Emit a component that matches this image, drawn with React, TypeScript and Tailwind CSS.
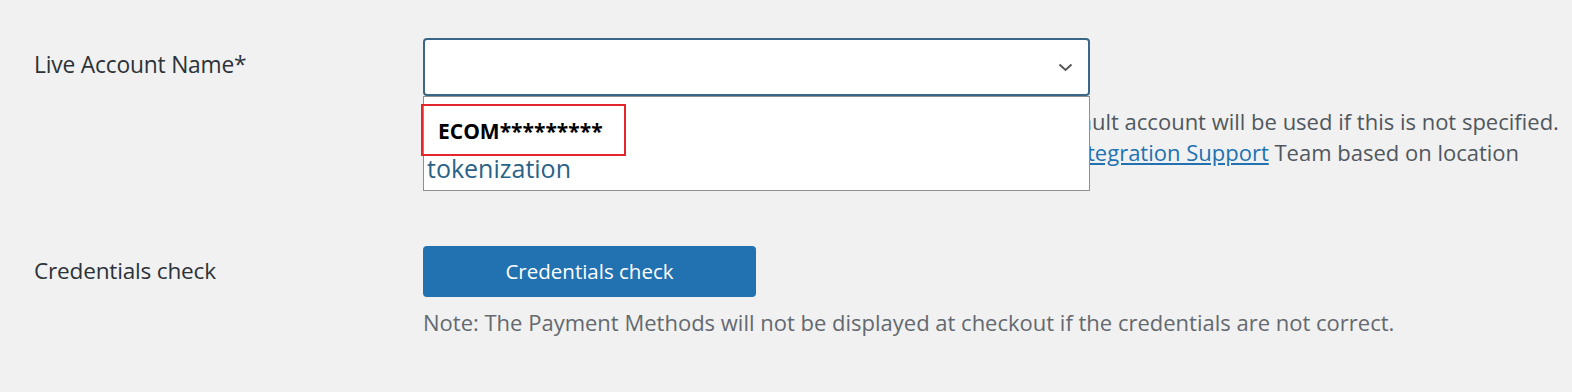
import React from "react";

export default function App() {
  return (
    <div className="w-[1572px] h-[392px] bg-[#f1f1f1] overflow-hidden" style={{ fontFamily: '"Open Sans", "Noto Sans", sans-serif' }}>
      <div className="pt-[38px] pl-[34px]">
        {/* Row 1 */}
        <div className="flex">
          <div className="w-[389px] pt-[12px] text-[22.8px] leading-[30px] text-[#2c3338] tracking-[-0.2px]">Live Account Name*</div>
          <div className="relative w-[1140px]">
            <div className="w-[667px] h-[58px] bg-white border-2 border-[#3a6786] rounded-[4px] flex items-center justify-end pr-[15px]">
              <svg width="15" height="9" viewBox="0 0 15 9" fill="none">
                <path d="M1.5 1.5L7.5 7L13.5 1.5" stroke="#555" strokeWidth="1.9" />
              </svg>
            </div>
            <div className="pt-[10px] text-[22px] leading-[31px] text-[#50575e] whitespace-nowrap">
              <p>
                <span className="inline-block w-[669px] overflow-hidden text-right align-bottom">Enter the account name for live mode. The defa</span>
                ult account will be used if this is not specified.
              </p>
              <p>
                <span className="inline-block w-[664px] overflow-hidden text-right align-bottom">If you have any questions, please contact the </span>
                <a className="text-[#2271b1] underline">
                  <span className="hidden">In</span>tegration Support
                </a>{" "}
                Team based on location
              </p>
            </div>
            <div className="absolute left-0 top-[58px] w-[667px] h-[95px] bg-white border border-[#8c8f94] flex flex-col">
              <div className="ml-[-3px] mt-[7px] w-[205px] h-[52px] border-2 border-[#e3262b] flex items-center pl-[15px] pt-[4px]">
                <span className="text-[21px] font-bold text-black">ECOM*********</span>
              </div>
              <div className="pl-[3px] text-[25px] text-[#2a6387] leading-[28px] mt-[-2px]">tokenization</div>
            </div>
          </div>
        </div>
        {/* Row 2 */}
        <div className="flex mt-[78px]">
          <div className="w-[389px] pt-[10px] text-[22.6px] leading-[30px] text-[#2c3338] tracking-[-0.2px]">Credentials check</div>
          <div>
            <button className="w-[333px] h-[51px] bg-[#2271b1] rounded-[4px] text-white text-[20.5px]">Credentials check</button>
            <p className="mt-[10px] text-[22px] leading-[30px] text-[#646970]">
              Note: The Payment Methods will not be displayed at checkout if the credentials are not correct.
            </p>
          </div>
        </div>
      </div>
    </div>
  );
}
